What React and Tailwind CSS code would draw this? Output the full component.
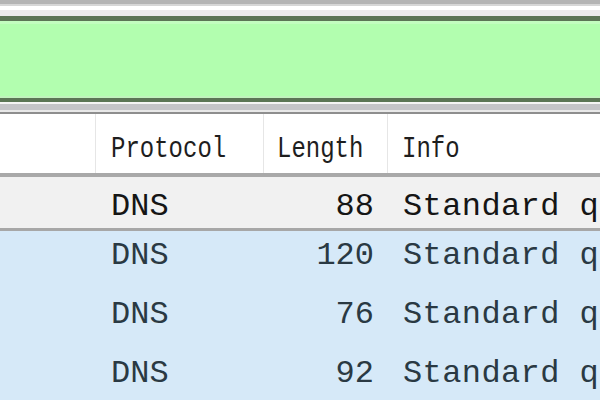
import React from "react";

const rows = [
  { proto: "DNS", len: 88, info: "Standard query" },
  { proto: "DNS", len: 120, info: "Standard query" },
  { proto: "DNS", len: 76, info: "Standard query" },
  { proto: "DNS", len: 92, info: "Standard query" },
];

const mono = { fontFamily: '"Liberation Mono", "DejaVu Sans Mono", monospace' };

const App = () => {
  return (
    <div className="w-[600px] h-[400px] overflow-hidden bg-white flex flex-col" style={mono}>
      {/* TOOLBAR STRIPES */}
      <div className="h-[4px] shrink-0 bg-[#b4b4b4]"></div>
      <div className="h-[2px] shrink-0 bg-[#d6d6d6]"></div>
      <div className="h-[4px] shrink-0 bg-white"></div>
      <div className="h-[6px] shrink-0 bg-[#ebebeb]"></div>

      {/* FILTER BAR */}
      <div className="h-[5px] shrink-0 bg-[#5b7555]"></div>
      <div className="h-[77px] shrink-0 bg-[#b2feaf] flex flex-col">
        <div className="h-[3px] bg-[#c2fdbf]"></div>
        <div className="flex-1"></div>
        <div className="h-[2px] bg-[#c0f3bc]"></div>
      </div>
      <div className="h-[4px] shrink-0 bg-[#5b7555]"></div>
      <div className="h-[2px] shrink-0 bg-[#f4f4f4]"></div>
      <div className="h-[6px] shrink-0 bg-[#c4c4c8]"></div>
      <div className="h-[2px] shrink-0 bg-[#e8e8e8]"></div>
      <div className="h-[2px] shrink-0 bg-[#8e8e8e]"></div>

      {/* COLUMN HEADER */}
      <div className="h-[59px] shrink-0 flex text-[24px] leading-none text-[#1e1e1e]">
        <div className="w-[96px] border-r border-[#e6e6e6]"></div>
        <div className="w-[168px] border-r border-[#e6e6e6] pl-[15px] pt-[23px]">
          <div className="scale-y-125">Protocol</div>
        </div>
        <div className="w-[124px] border-r border-[#e6e6e6] pl-[13px] pt-[23px]">
          <div className="scale-y-125">Length</div>
        </div>
        <div className="flex-1 pl-[14px] pt-[23px]">
          <div className="scale-y-125">Info</div>
        </div>
      </div>
      <div className="h-[4px] shrink-0 bg-[#a9a9a9]"></div>

      {/* PACKET ROWS */}
      {rows.map((r, i) => {
        const first = i === 0;
        return (
          <React.Fragment key={i}>
            <div
              className={
                first
                  ? "h-[51px] shrink-0 flex items-start pt-[14px] bg-[#f1f1f1] text-[32px] leading-none text-[#151515] whitespace-nowrap overflow-hidden"
                  : "h-[59px] shrink-0 flex items-start pt-[9px] bg-[#d6e9f8] text-[32px] leading-none text-[#2a3943] whitespace-nowrap overflow-hidden"
              }
            >
              <div className="w-[96px] shrink-0"></div>
              <div className="w-[168px] shrink-0 pl-[15px]">{r.proto}</div>
              <div className="w-[124px] shrink-0 pr-[14px] text-right">{r.len}</div>
              <div className="flex-1 pl-[15px] overflow-hidden tracking-[0.4px]">{r.info}</div>
            </div>
            {first && <div className="h-[3px] shrink-0 bg-[#a7a7a7]"></div>}
          </React.Fragment>
        );
      })}
    </div>
  );
};

export default App;
